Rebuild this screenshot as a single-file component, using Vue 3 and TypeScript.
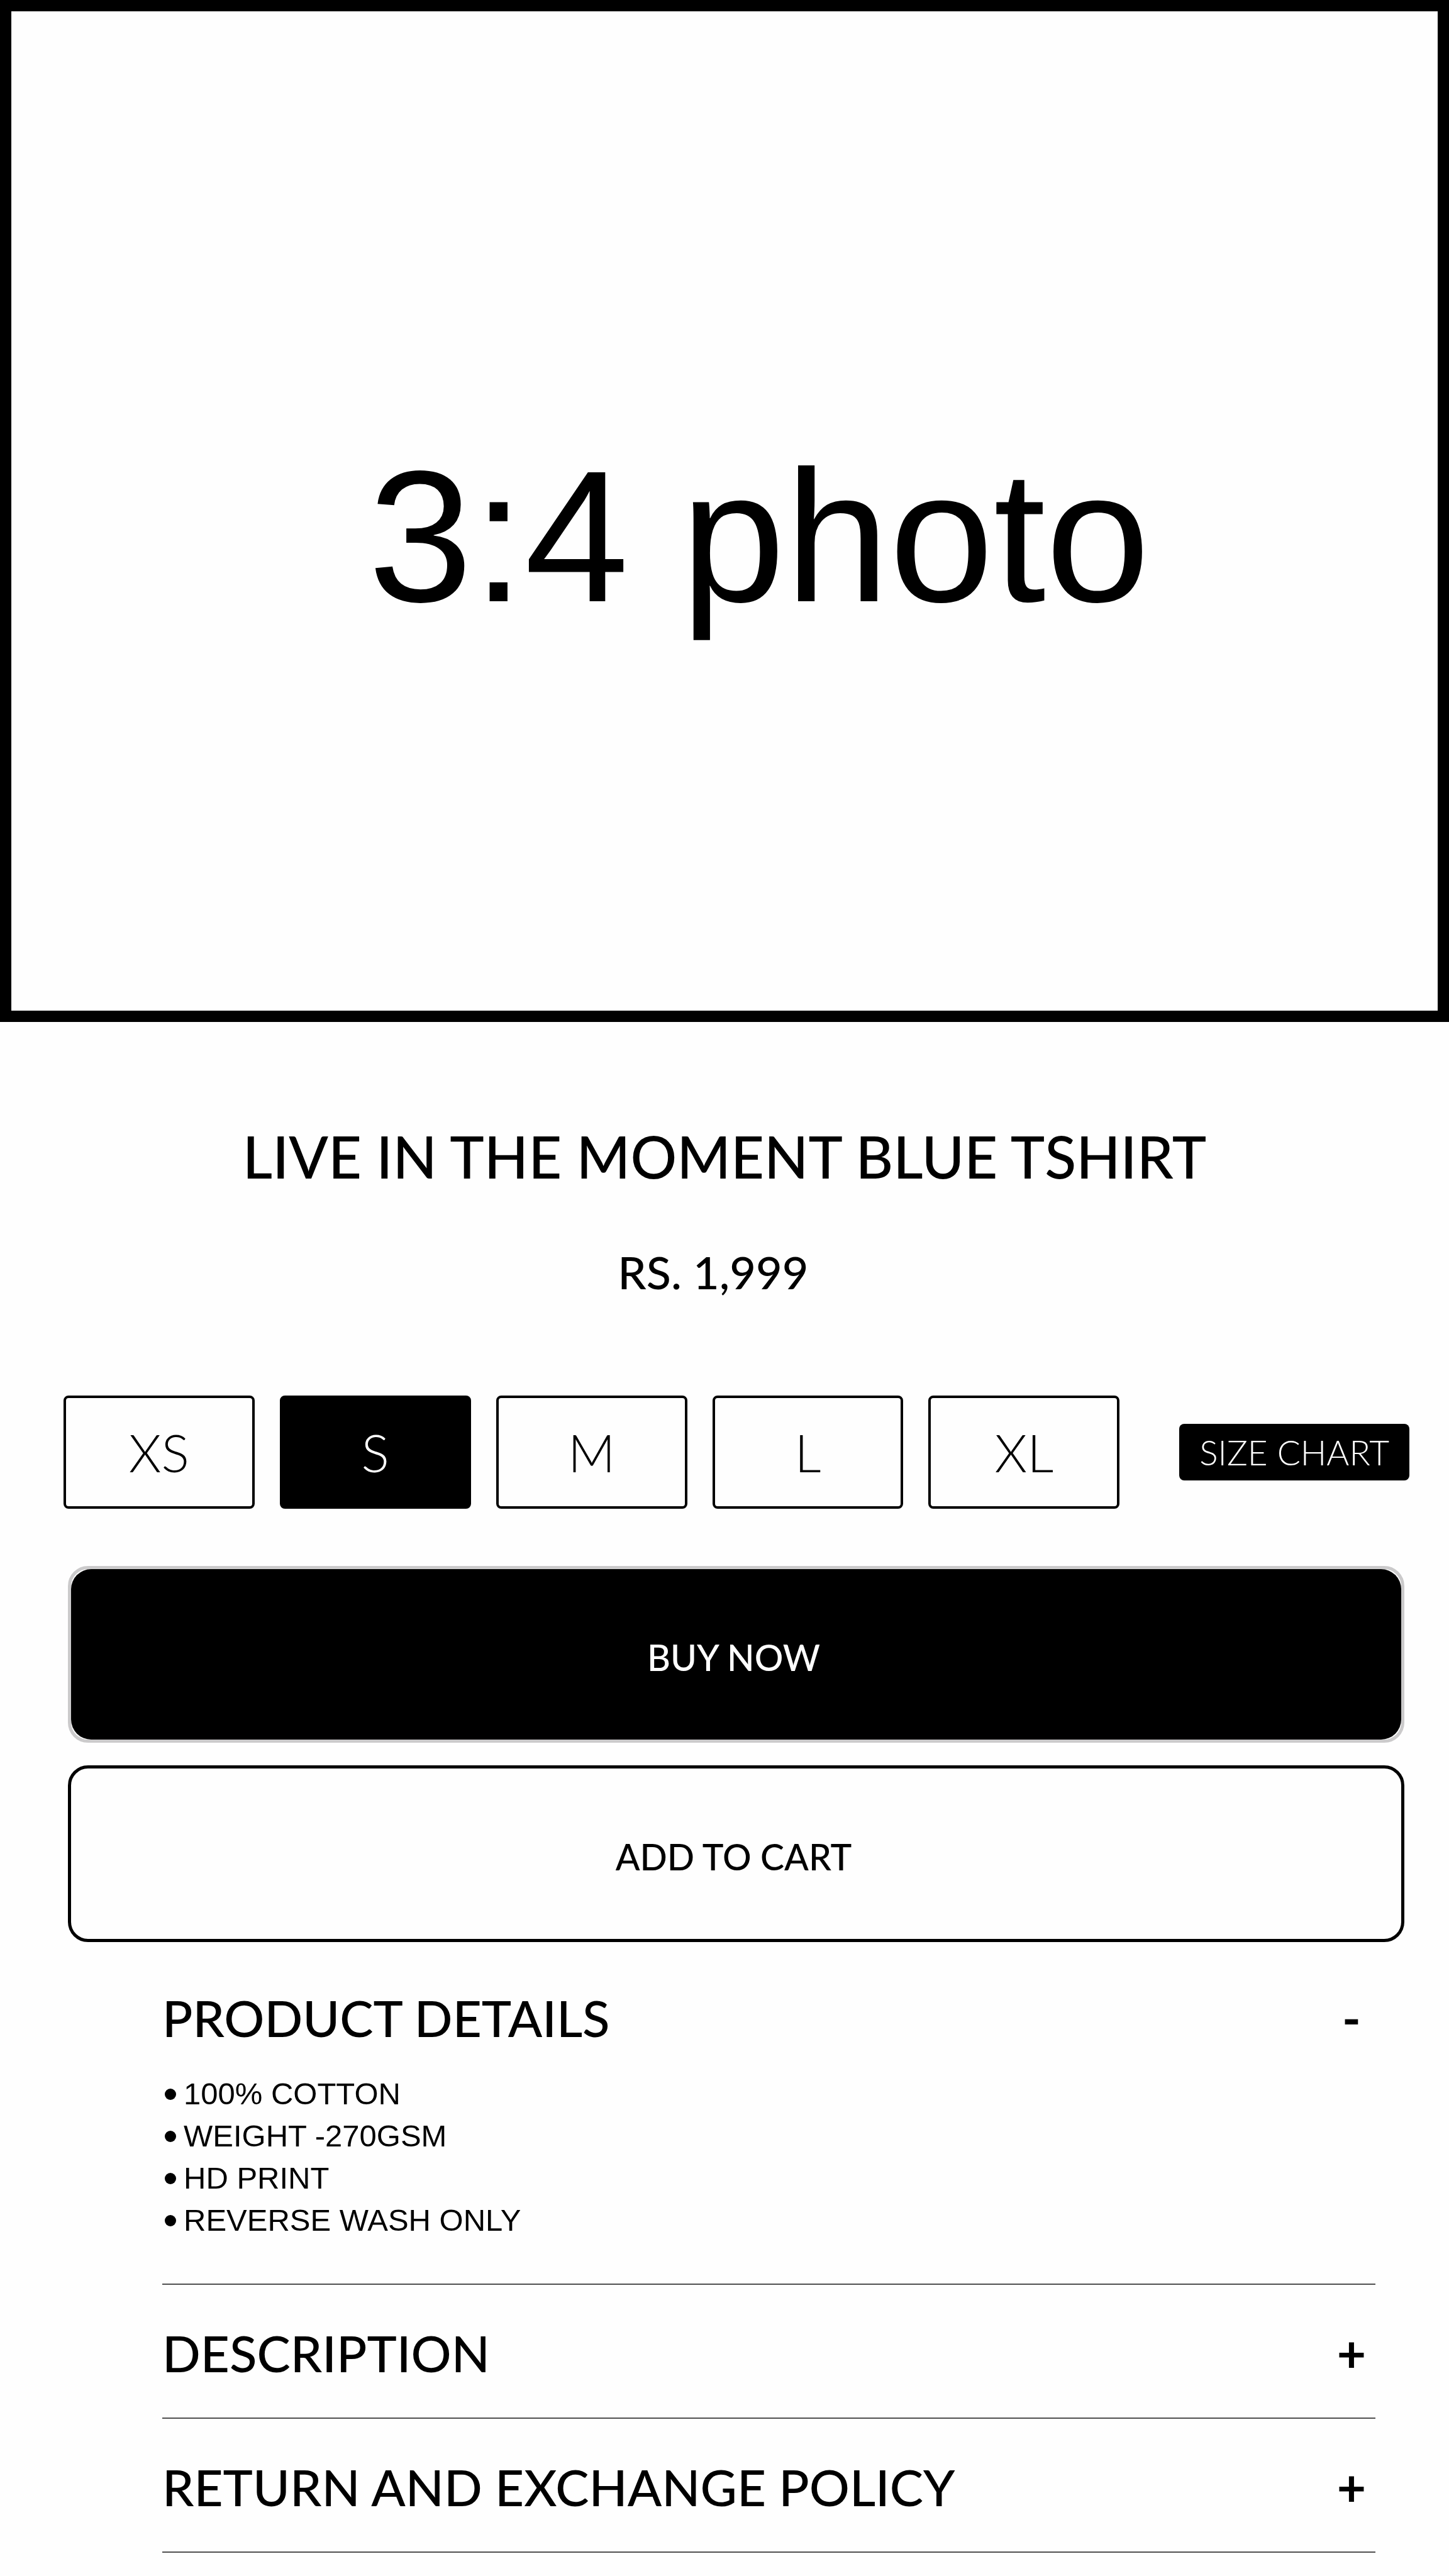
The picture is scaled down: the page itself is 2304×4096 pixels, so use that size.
<script setup lang="ts">
import { ref } from 'vue'

interface Section {
  id: string
  title: string
  items: string[]
}

const sizes: string[] = ['XS', 'S', 'M', 'L', 'XL']
const selectedSize = ref<string>('S')

const sections: Section[] = [
  {
    id: 'details',
    title: 'PRODUCT DETAILS',
    items: ['100% COTTON', 'WEIGHT -270GSM', 'HD PRINT', 'REVERSE WASH ONLY'],
  },
  { id: 'description', title: 'DESCRIPTION', items: [] },
  { id: 'returns', title: 'RETURN AND EXCHANGE POLICY', items: [] },
]
const openSection = ref<string>('details')

function toggle(id: string): void {
  openSection.value = openSection.value === id ? '' : id
}
</script>

<template>
  <main class="product">
    <figure class="photo">
      <figcaption class="photo-label">3:4 photo</figcaption>
    </figure>

    <h1 class="title">LIVE IN THE MOMENT BLUE TSHIRT</h1>
    <p class="price">RS. 1,999</p>

    <div class="options">
      <div class="sizes" role="group" aria-label="Size">
        <button
          v-for="size in sizes"
          :key="size"
          type="button"
          class="size"
          :class="{ selected: size === selectedSize }"
          :aria-pressed="size === selectedSize"
          @click="selectedSize = size"
        >
          {{ size }}
        </button>
      </div>
      <button type="button" class="chart">SIZE CHART</button>
    </div>

    <div class="actions">
      <button type="button" class="action buy"><span class="fill">BUY NOW</span></button>
      <button type="button" class="action cart">ADD TO CART</button>
    </div>

    <div class="sections">
      <section v-for="section in sections" :key="section.id" class="section">
        <h2 class="heading">
          <button
            type="button"
            class="toggle"
            :aria-expanded="section.id === openSection"
            @click="toggle(section.id)"
          >
            <span>{{ section.title }}</span>
            <span class="mark">{{ section.id === openSection ? '-' : '+' }}</span>
          </button>
        </h2>
        <ul v-if="section.id === openSection && section.items.length" class="list">
          <li v-for="item in section.items" :key="item" class="item">{{ item }}</li>
        </ul>
      </section>
    </div>
  </main>
</template>

<style>
body {
  margin: 0;
  background: #fefefe;
}
</style>

<style scoped>
.product {
  min-height: 100vh;
  color: #000;
  background: #fefefe;
  font-family: Lato, 'Open Sans', sans-serif;
}

button {
  margin: 0;
  padding: 0;
  font: inherit;
  color: inherit;
  background: none;
  border: 0;
  cursor: pointer;
}

.photo {
  box-sizing: border-box;
  display: flex;
  align-items: center;
  justify-content: center;
  margin: 0;
  padding: 80px 0 0 110px;
  aspect-ratio: 2304 / 1625;
  border: 18px solid #000;
}

.photo-label {
  font: 298px/298px 'Liberation Sans', Arial, sans-serif;
  white-space: nowrap;
}

.title {
  margin: 162px 0 0;
  font-size: 92px;
  font-weight: 500;
  line-height: 104px;
  text-align: center;
}

.price {
  margin: 91px 0 0;
  padding-right: 36px;
  font-size: 72px;
  font-weight: 500;
  line-height: 80px;
  text-align: center;
}

.options {
  display: flex;
  align-items: center;
  gap: 95px;
  margin-top: 157px;
  padding: 0 63px 0 101px;
}

.sizes {
  display: flex;
  flex: 1;
  gap: 40px;
}

.size {
  box-sizing: border-box;
  flex: 1;
  height: 180px;
  border: 4px solid #000;
  border-radius: 8px;
  font-size: 83px;
  font-weight: 300;
  line-height: 92px;
}

.size.selected {
  color: #fff;
  background: #000;
}

.chart {
  padding: 13px 32px;
  border-radius: 8px;
  color: #fff;
  background: #000;
  font-size: 55px;
  font-weight: 300;
  line-height: 64px;
  white-space: nowrap;
}

.actions {
  display: flex;
  flex-direction: column;
  gap: 36px;
  margin-top: 91px;
  padding: 0 71px 0 108px;
}

.action {
  display: flex;
  box-sizing: border-box;
  height: 281px;
  border-radius: 32px;
  font-size: 57px;
  font-weight: 500;
  line-height: 64px;
}

.buy {
  border: 5px solid #cbcacb;
  color: #fff;
}

.fill {
  display: flex;
  flex: 1;
  align-self: stretch;
  align-items: center;
  justify-content: center;
  padding: 8px 8px 0 0;
  border-radius: 32px;
  background: #000;
}

.cart {
  align-items: center;
  justify-content: center;
  padding: 8px 8px 0 0;
  border: 5px solid #000;
}

.sections {
  padding: 12px 117px 0 258px;
}

.section {
  padding: 63px 0 58px;
  border-bottom: 2px solid #505050;
}

.heading {
  margin: 0;
  font-size: 80px;
  font-weight: 500;
  line-height: 90px;
}

.toggle {
  display: flex;
  justify-content: space-between;
  width: 100%;
  text-align: left;
}

.mark {
  width: 76px;
  font-weight: 700;
  text-align: center;
}

.list {
  margin: 43px 0 9px;
  padding: 0;
  list-style: none;
  font: 49px/67px 'Liberation Sans', Arial, sans-serif;
}

.item {
  display: flex;
  align-items: center;
  gap: 12px;
  padding-left: 4px;
}

.item::before {
  width: 18px;
  height: 18px;
  border-radius: 50%;
  background: #000;
  content: '';
}
</style>
